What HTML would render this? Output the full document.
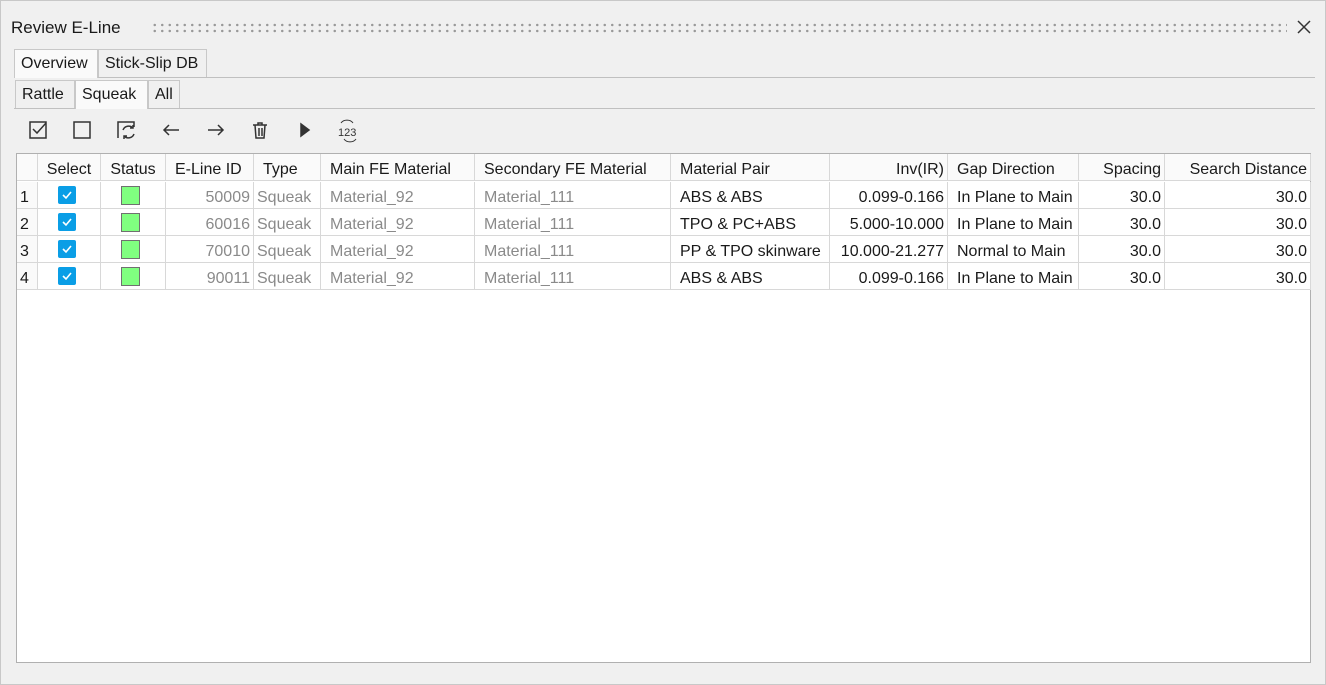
<!DOCTYPE html>
<html><head><meta charset="utf-8"><style>
*{margin:0;padding:0;box-sizing:border-box}
body{width:1326px;height:685px;background:#f0f0f0;font-family:"Liberation Sans",sans-serif;font-size:16px;color:#1a1a1a;position:relative;overflow:hidden;border:1px solid #c8c8c8}
.a{position:absolute;white-space:nowrap}
.tab{position:absolute;border:1px solid #c8c8c8;border-bottom:none;background:#f0f0f0;padding:0 6px;line-height:28px;height:28px}
.tab.sel{background:#fafafa}
.tbl{position:absolute;left:15px;top:152px;width:1295px;height:510px;background:#fff;border:1px solid #b0b0b0}
.c{position:absolute;height:27px;line-height:31px;border-right:1px solid #d8d8d8;border-bottom:1px solid #d8d8d8;padding:0 3px;overflow:hidden;white-space:nowrap}
.h{background:#fafafa}
.g{color:#8a8a8a}
.r{text-align:right}
.cb{position:absolute;width:18px;height:18px;background:#0a9ee6;border-radius:2px;left:20px;top:4px}
.cb svg{display:block}
.sq{position:absolute;width:19px;height:19px;background:#80ff80;border:1px solid #707070;left:20px;top:4px}
</style></head><body>
<div class="a" style="left:10px;top:17px;font-size:17px">Review E-Line</div>
<div class="a" style="left:150px;top:21px;width:1136px;height:12px;background-image:radial-gradient(circle,#999 1.1px,transparent 1.4px);background-size:7.5px 6px"></div>
<svg class="a" style="left:1296px;top:19px" width="14" height="14"><path d="M1 1L13 13M13 1L1 13" stroke="#333" stroke-width="1.5"/></svg>
<div class="a" style="left:13px;top:76px;width:1301px;height:1px;background:#c0c0c0"></div>
<div class="tab sel" style="left:13px;top:48px;width:84px;height:29px">Overview</div>
<div class="tab" style="left:97px;top:48px;width:109px">Stick-Slip DB</div>
<div class="a" style="left:13px;top:107px;width:1301px;height:1px;background:#c0c0c0"></div>
<div class="tab" style="left:14px;top:79px;width:60px">Rattle</div>
<div class="tab sel" style="left:74px;top:79px;width:73px;height:29px">Squeak</div>
<div class="tab" style="left:147px;top:79px;width:32px">All</div>
<svg class="a" style="left:20px;top:114px" width="350" height="30" fill="none" stroke="#333" stroke-width="1.5">
<rect x="9" y="7" width="16" height="16"/><path d="M12 14l4 4 9-10"/>
<rect x="53" y="7" width="16" height="16"/>
<path d="M97 23V7h16v5"/><path d="M102 15a6 6 0 0 1 10-2M113 19a6 6 0 0 1-10 2"/><path d="M112 10v3h-3M103 24v-3h3"/>
<path d="M158 15h-15M148 10l-5 5 5 5"/>
<path d="M187 15h15M197 10l5 5-5 5"/>
<path d="M232 10h14M237 10V8h4v2M234 10l1 13h8l1-13M238 13v8M241 13v8"/>
<path d="M280 9l8 6-8 6z" fill="#333"/>
<text x="317" y="21" font-size="11" fill="#333" stroke="none" font-family="Liberation Sans">123</text><path d="M320 8a7 6 0 0 1 12 0M335 24a7 6 0 0 1-12 0" stroke-width="1"/>
</svg>
<div class="tbl">
<div class="c h" style="left:0;top:0;width:21px"></div>
<div class="c h" style="left:21px;top:0;width:63px;text-align:center">Select</div>
<div class="c h" style="left:84px;top:0;width:65px;text-align:center">Status</div>
<div class="c h" style="left:149px;top:0;width:88px;padding-left:9px">E-Line ID</div>
<div class="c h" style="left:237px;top:0;width:67px;padding-left:9px">Type</div>
<div class="c h" style="left:304px;top:0;width:154px;padding-left:9px">Main FE Material</div>
<div class="c h" style="left:458px;top:0;width:196px;padding-left:9px">Secondary FE Material</div>
<div class="c h" style="left:654px;top:0;width:159px;padding-left:9px">Material Pair</div>
<div class="c h r" style="left:813px;top:0;width:118px">Inv(IR)</div>
<div class="c h" style="left:931px;top:0;width:131px;padding-left:9px">Gap Direction</div>
<div class="c h r" style="left:1062px;top:0;width:86px">Spacing</div>
<div class="c h r" style="left:1148px;top:0;width:146px">Search Distance</div>
</div>
<script>
var d=[["1","50009","ABS  &amp; ABS","0.099-0.166","In Plane to Main"],["2","60016","TPO  &amp; PC+ABS","5.000-10.000","In Plane to Main"],["3","70010","PP  &amp; TPO skinware","10.000-21.277","Normal to Main"],["4","90011","ABS  &amp; ABS","0.099-0.166","In Plane to Main"]];
var h="";d.forEach(function(r,i){var t=28+i*27;
h+='<div class="c h" style="left:0;top:'+t+'px;width:21px">'+r[0]+'</div>'+
'<div class="c" style="left:21px;top:'+t+'px;width:63px"><div class="cb"><svg width="18" height="18"><path d="M5 9l3 3 5-6" stroke="#fff" stroke-width="1.6" fill="none"/></svg></div></div>'+
'<div class="c" style="left:84px;top:'+t+'px;width:65px"><div class="sq"></div></div>'+
'<div class="c g r" style="left:149px;top:'+t+'px;width:88px">'+r[1]+'</div>'+
'<div class="c g" style="left:237px;top:'+t+'px;width:67px">Squeak</div>'+
'<div class="c g" style="left:304px;top:'+t+'px;width:154px;padding-left:9px">Material_92</div>'+
'<div class="c g" style="left:458px;top:'+t+'px;width:196px;padding-left:9px">Material_111</div>'+
'<div class="c" style="left:654px;top:'+t+'px;width:159px;padding-left:9px">'+r[2]+'</div>'+
'<div class="c r" style="left:813px;top:'+t+'px;width:118px">'+r[3]+'</div>'+
'<div class="c" style="left:931px;top:'+t+'px;width:131px;padding-left:9px">'+r[4]+'</div>'+
'<div class="c r" style="left:1062px;top:'+t+'px;width:86px">30.0</div>'+
'<div class="c r" style="left:1148px;top:'+t+'px;width:146px">30.0</div>';});
document.querySelector('.tbl').insertAdjacentHTML('beforeend',h);
</script>
</body></html>
